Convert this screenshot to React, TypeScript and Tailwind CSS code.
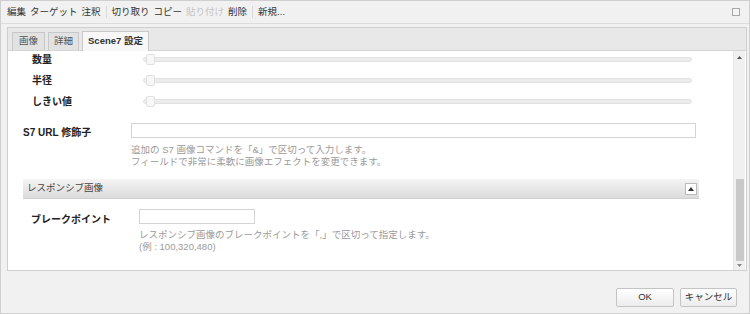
const font = '"Liberation Sans", "Noto Sans CJK JP", sans-serif';

function Slider() {
  return (
    <div className="relative h-[5px] w-[549px] rounded-full border border-[#e2e2e2] bg-[#ececec]">
      <div className="absolute left-[2px] top-[-4px] h-[11px] w-[9px] rounded-[2px] border border-[#e0e0e0] bg-[#f7f7f7]" />
    </div>
  );
}

function SliderRow({ label }: { label: string }) {
  return (
    <div className="flex h-[21px] items-center">
      <div className="w-[133px] pl-[22px] text-[10px] font-bold text-[#222]">{label}</div>
      <Slider />
    </div>
  );
}

function Help({ lines, top }: { lines: string[]; top: string }) {
  return (
    <div className={`${top} text-[9.5px] leading-[12px] text-[#9a9a9a]`}>
      {lines.map((l) => (
        <div key={l}>{l}</div>
      ))}
    </div>
  );
}

export default function App() {
  const tools = [
    { label: '編集' },
    { label: 'ターゲット' },
    { label: '注釈', sep: true },
    { label: '切り取り' },
    { label: 'コピー' },
    { label: '貼り付け', disabled: true },
    { label: '削除', sep: true },
    { label: '新規...' },
  ];

  return (
    <div
      className="flex h-[314px] w-[750px] flex-col border border-[#cfcfcf] bg-[#f1f1f1] text-[#333]"
      style={{ fontFamily: font }}
    >
      {/* toolbar */}
      <div className="flex h-[23px] shrink-0 items-center border-b border-[#dcdcdc] pl-[6px] pr-[9px] text-[9.5px]">
        {tools.map((t) => (
          <div key={t.label} className="flex items-center">
            <span className={t.disabled ? 'text-[#c4c4c4]' : 'text-[#333]'}>{t.label}</span>
            {t.sep ? (
              <span className="mx-[5px] h-[12px] w-px bg-[#dadada]" />
            ) : (
              <span className="w-[4px]" />
            )}
          </div>
        ))}
        <div className="ml-auto h-[8px] w-[8px] border border-[#a8a8a8] bg-[#f6f6f6]" />
      </div>

      {/* panel */}
      <div className="ml-[6px] mr-[2px] mt-[3px] flex min-h-0 flex-1 flex-col border border-[#cfcfcf] bg-[#e8e8e8]">
        <div className="flex h-[23px] shrink-0 items-end gap-[3px] border-b border-[#d4d4d4] pl-[4px]">
          <div className="flex h-[18px] w-[33px] items-center justify-center border border-b-0 border-[#c8c8c8] bg-[#e2e2e2] text-[9.5px] text-[#555]">
            画像
          </div>
          <div className="flex h-[18px] w-[31px] items-center justify-center border border-b-0 border-[#c8c8c8] bg-[#e2e2e2] text-[9.5px] text-[#555]">
            詳細
          </div>
          <div className="mb-[-1px] flex h-[20px] w-[67px] items-center justify-center border border-b-0 border-[#c8c8c8] bg-[#f7f7f7] text-[9.5px] font-bold text-[#333]">
            Scene7 設定
          </div>
        </div>

        <div className="flex min-h-0 flex-1 bg-white">
          <div className="min-w-0 flex-1 overflow-hidden pl-[2px]">
            <div className="-mt-[2px]">
              <SliderRow label="数量" />
              <SliderRow label="半径" />
              <SliderRow label="しきい値" />
            </div>

            <div className="mt-[11px] flex">
              <div className="w-[121px] pl-[13px] pt-[2px] text-[10px] font-bold text-[#222]">S7 URL 修飾子</div>
              <div>
                <div className="h-[15px] w-[565px] border border-[#d4d4d4] bg-white" />
                <Help
                  top="mt-[6px]"
                  lines={[
                    '追加の S7 画像コマンドを「&」で区切って入力します。',
                    'フィールドで非常に柔軟に画像エフェクトを変更できます。',
                  ]}
                />
              </div>
            </div>

            <div className="ml-[13px] mt-[11px] flex h-[20px] w-[676px] items-center justify-between border-b border-[#d0d0d0] bg-gradient-to-b from-[#f4f4f4] to-[#dcdcdc] pl-[4px] pr-[2px]">
              <span className="text-[9.5px] text-[#444]">レスポンシブ画像</span>
              <div className="flex h-[12px] w-[12px] items-center justify-center border border-[#bbb] bg-white">
                <svg width="6" height="4" viewBox="0 0 6 4">
                  <path d="M0 4 L3 0 L6 4 Z" fill="#333" />
                </svg>
              </div>
            </div>

            <div className="mt-[10px] flex">
              <div className="w-[129px] pl-[21px] pt-[3px] text-[10px] font-bold text-[#222]">ブレークポイント</div>
              <div>
                <div className="h-[15px] w-[116px] border border-[#d4d4d4] bg-white" />
                <Help
                  top="mt-[5px]"
                  lines={['レスポンシブ画像のブレークポイントを「,」で区切って指定します。', '(例 : 100,320,480)']}
                />
              </div>
            </div>
          </div>

          {/* scrollbar */}
          <div className="mr-[1px] flex w-[12px] shrink-0 flex-col items-center border-l border-[#e6e6e6] bg-[#f0f0f0]">
            <div className="flex h-[12px] items-center justify-center">
              <svg width="5" height="3" viewBox="0 0 5 3">
                <path d="M0 3 L2.5 0 L5 3 Z" fill="#555" />
              </svg>
            </div>
            <div className="flex-1" />
            <div className="h-[82px] w-[8px] bg-[#c9c9c9]" />
            <div className="flex h-[9px] items-center justify-center">
              <svg width="5" height="3" viewBox="0 0 5 3">
                <path d="M0 0 L2.5 3 L5 0 Z" fill="#888" />
              </svg>
            </div>
          </div>
        </div>
      </div>

      {/* footer */}
      <div className="flex h-[42px] shrink-0 items-end justify-end gap-[6px] pb-[6px] pr-[12px]">
        <button className="h-[19px] w-[58px] rounded-[2px] border border-[#c4c4c4] bg-gradient-to-b from-white to-[#ececec] text-[9.5px] text-[#333]">
          OK
        </button>
        <button className="h-[19px] w-[57px] rounded-[2px] border border-[#c4c4c4] bg-gradient-to-b from-white to-[#ececec] text-[9.5px] text-[#333]">
          キャンセル
        </button>
      </div>
    </div>
  );
}
